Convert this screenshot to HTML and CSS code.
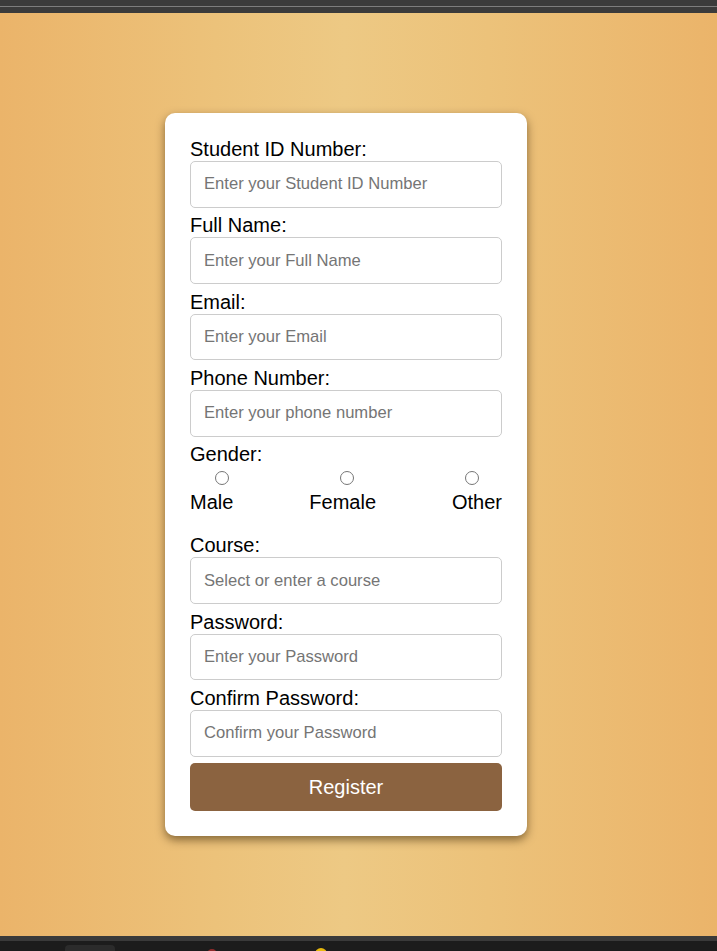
FILE: index.html
```html
<!DOCTYPE html>
<html lang="en">
<head>
<meta charset="utf-8">
<title>Student Registration</title>
<link rel="stylesheet" href="styles.css">
</head>
<body>
<div class="topbar"><div class="topline"></div></div>
<main class="stage">
  <form class="card">
    <label class="field-label" for="sid">Student ID Number:</label>
    <input class="field" id="sid" type="text" placeholder="Enter your Student ID Number">

    <label class="field-label" for="fname">Full Name:</label>
    <input class="field" id="fname" type="text" placeholder="Enter your Full Name">

    <label class="field-label" for="email">Email:</label>
    <input class="field" id="email" type="email" placeholder="Enter your Email">

    <label class="field-label" for="phone">Phone Number:</label>
    <input class="field" id="phone" type="tel" placeholder="Enter your phone number">

    <span class="field-label">Gender:</span>
    <div class="gender">
      <div class="radios">
        <input class="radio" type="radio" name="gender" id="male">
        <input class="radio" type="radio" name="gender" id="female">
        <input class="radio" type="radio" name="gender" id="other">
      </div>
      <div class="radio-texts">
        <label for="male">Male</label>
        <label for="female">Female</label>
        <label for="other">Other</label>
      </div>
    </div>

    <label class="field-label" for="course">Course:</label>
    <input class="field" id="course" type="text" placeholder="Select or enter a course">

    <label class="field-label" for="pw">Password:</label>
    <input class="field" id="pw" type="password" placeholder="Enter your Password">

    <label class="field-label" for="cpw">Confirm Password:</label>
    <input class="field" id="cpw" type="password" placeholder="Confirm your Password">

    <button class="submit" type="button">Register</button>
  </form>
</main>
<div class="bottombar">
  <div class="bottom-top"></div>
  <div class="bottom-main">
    <div class="tab"></div>
    <div class="dot red"></div>
    <div class="dot yellow"></div>
  </div>
</div>
</body>
</html>
```
FILE: styles.css
```css
* { box-sizing: border-box; }
html, body { margin: 0; padding: 0; }
body {
  width: 717px;
  height: 951px;
  overflow: hidden;
  font-family: "Liberation Sans", Arial, sans-serif;
  background: #1c1c1c;
}
.topbar {
  height: 13px;
  background: #3b3b3b;
  padding-top: 6px;
}
.topline {
  height: 1px;
  background: #7d7d7d;
}
.stage {
  height: 923px;
  display: flex;
  align-items: center;
  justify-content: center;
  padding-right: 25px;
  background: linear-gradient(90deg, #ebb46a 0%, #ecc27a 30%, #edc984 48%, #ecc27a 68%, #ebb46a 100%);
}
.card {
  width: 362px;
  background: #fff;
  border-radius: 10px;
  padding: 25px;
  box-shadow: 0 4px 10px rgba(50, 30, 0, 0.55);
  display: flex;
  flex-direction: column;
}
.field-label {
  display: block;
  font-size: 20px;
  line-height: 23px;
  color: #000;
}
.field {
  display: block;
  width: 100%;
  height: 46.5px;
  margin: 0 0 6.83px;
  padding: 0 13px;
  border: 1px solid #ccc;
  border-radius: 5px;
  font-family: "Liberation Sans", Arial, sans-serif;
  font-size: 16.6px;
  color: #000;
  background: #fff;
}
.field::placeholder { color: #757575; }
.gender {
  margin-bottom: 20px;
}
.radios {
  display: flex;
  justify-content: center;
  gap: 111.7px;
  padding: 5px 0 0 2px;
}
.radio {
  width: 13.5px;
  height: 13.5px;
  margin: 0;
}
.radio-texts {
  display: flex;
  justify-content: space-between;
  margin-top: 6.5px;
  font-size: 20px;
  line-height: 23px;
  color: #000;
}
.submit {
  height: 47.5px;
  width: 100%;
  border: none;
  border-radius: 5px;
  background: #8b6340;
  color: #fff;
  font-family: "Liberation Sans", Arial, sans-serif;
  font-size: 20px;
  cursor: pointer;
}
.bottombar { height: 15px; }
.bottom-top { height: 5px; background: #3a3a3a; }
.bottom-main {
  height: 10px;
  background: #1c1c1c;
  display: flex;
  align-items: flex-start;
  padding-left: 65px;
  overflow: hidden;
}
.tab {
  width: 50px;
  height: 10px;
  margin-top: 4px;
  background: #2b2b2b;
  border-radius: 4px 4px 0 0;
}
.dot {
  border-radius: 50%;
  flex: none;
}
.red {
  width: 10px;
  height: 10px;
  margin: 8px 0 0 92px;
  background: #8f2b2b;
}
.yellow {
  width: 12px;
  height: 12px;
  margin: 7px 0 0 98px;
  background: #e8b90c;
}
```
